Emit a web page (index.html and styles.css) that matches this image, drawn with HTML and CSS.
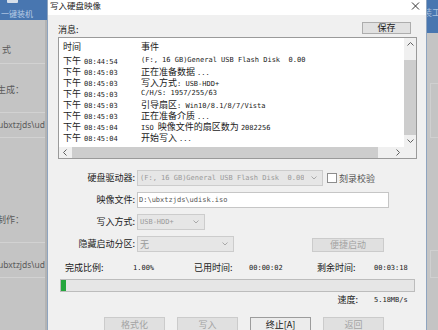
FILE: index.html
```html
<!DOCTYPE html>
<html lang="zh-CN">
<head>
  <meta charset="UTF-8">
  <title>写入硬盘映像</title>
  <link rel="stylesheet" href="styles.css">
</head>
<body>
<div class="screen">

  <div class="app-left">
    <div class="app-head">
      <span class="app-icon"></span>
      <span>一键装机</span>
    </div>
    <div class="app-side">
      <div class="side-row row-a">式</div>
      <div class="side-row row-b">生成：</div>
      <div class="side-row row-c">ubxtzjds\udisk</div>
      <div class="side-row row-d">制作：</div>
      <div class="side-row row-e">ubxtzjds\udisk</div>
    </div>
  </div>

  <div class="dialog">
    <div class="titlebar">
      <span class="title">写入硬盘映像</span>
      <svg class="close" width="9" height="8" viewBox="0 0 9 8"><path d="M1 0.5 L8 7.5 M8 0.5 L1 7.5" stroke="#333" stroke-width="1" fill="none"/></svg>
    </div>

    <div class="dialog-body">
      <div class="msg-head">
        <span class="msg-label">消息:</span>
        <button class="btn btn-save">保存</button>
      </div>

      <div class="log">
        <div class="log-list">
          <div class="log-head"><span class="col-time">时间</span><span>事件</span></div>
          <div class="log-row"><span class="col-time"><span>下午</span><span class="m">08:44:54</span></span><span class="m">(F:, 16 GB)General USB Flash Disk  0.00</span></div>
          <div class="log-row"><span class="col-time"><span>下午</span><span class="m">08:45:03</span></span><span>正在准备数据 <span class="m">...</span></span></div>
          <div class="log-row"><span class="col-time"><span>下午</span><span class="m">08:45:03</span></span><span>写入方式<span class="m">: USB-HDD+</span></span></div>
          <div class="log-row"><span class="col-time"><span>下午</span><span class="m">08:45:03</span></span><span class="m">C/H/S: 1957/255/63</span></div>
          <div class="log-row"><span class="col-time"><span>下午</span><span class="m">08:45:03</span></span><span>引导扇区<span class="m">: Win10/8.1/8/7/Vista</span></span></div>
          <div class="log-row"><span class="col-time"><span>下午</span><span class="m">08:45:03</span></span><span>正在准备介质 <span class="m">...</span></span></div>
          <div class="log-row"><span class="col-time"><span>下午</span><span class="m">08:45:04</span></span><span><span class="m">ISO </span>映像文件的扇区数为 <span class="m">2082256</span></span></div>
          <div class="log-row"><span class="col-time"><span>下午</span><span class="m">08:45:04</span></span><span>开始写入 <span class="m">...</span></span></div>
        </div>
        <div class="vscroll">
          <div class="arrow"><svg width="7" height="4" viewBox="0 0 7 4"><path d="M0.5 3.5 L3.5 0.5 L6.5 3.5" fill="none" stroke="#606060"/></svg></div>
          <div class="vtrack"><div class="thumb"></div></div>
          <div class="arrow"><svg width="7" height="4" viewBox="0 0 7 4"><path d="M0.5 0.5 L3.5 3.5 L6.5 0.5" fill="none" stroke="#606060"/></svg></div>
        </div>
        <div class="hscroll">
          <div class="arrow"><svg width="4" height="7" viewBox="0 0 4 7"><path d="M3.5 0.5 L0.5 3.5 L3.5 6.5" fill="none" stroke="#606060"/></svg></div>
          <div class="htrack"><div class="thumb"></div></div>
          <div class="arrow"><svg width="4" height="7" viewBox="0 0 4 7"><path d="M0.5 0.5 L3.5 3.5 L0.5 6.5" fill="none" stroke="#606060"/></svg></div>
        </div>
        <div class="corner"></div>
      </div>

      <div class="form">
        <label>硬盘驱动器:</label>
        <div class="field">
          <div class="combo combo-drive">
            <span class="combo-text m">(F:, 16 GB)General USB Flash Disk  0.00</span>
            <svg width="6" height="4" viewBox="0 0 6 4"><path d="M0.5 0.5 L3 3 L5.5 0.5" fill="none" stroke="#a8a8a8"/></svg>
          </div>
          <span class="check"></span>
          <span class="check-label">刻录校验</span>
        </div>

        <label>映像文件:</label>
        <div class="field">
          <div class="input"><span class="m">D:\ubxtzjds\udisk.iso</span></div>
        </div>

        <label>写入方式:</label>
        <div class="field">
          <div class="combo combo-mode">
            <span class="combo-text m">USB-HDD+</span>
            <svg width="6" height="4" viewBox="0 0 6 4"><path d="M0.5 0.5 L3 3 L5.5 0.5" fill="none" stroke="#a8a8a8"/></svg>
          </div>
        </div>

        <label>隐藏启动分区:</label>
        <div class="field">
          <div class="combo combo-hide">
            <span class="combo-text">无</span>
            <svg width="6" height="4" viewBox="0 0 6 4"><path d="M0.5 0.5 L3 3 L5.5 0.5" fill="none" stroke="#a8a8a8"/></svg>
          </div>
          <button class="btn btn-off btn-quick">便捷启动</button>
        </div>
      </div>

      <div class="stats">
        <span class="first">完成比例:</span><span class="m">1.00%</span>
        <span>已用时间:</span><span class="m">00:00:02</span>
        <span>剩余时间:</span><span class="m">00:03:18</span>
        <div class="progress"><div class="progress-fill" style="width: 1.4%"></div></div>
        <span class="speed-label">速度:</span><span class="m">5.18MB/s</span>
      </div>

      <div class="actions">
        <button class="btn btn-off">格式化</button>
        <button class="btn btn-off">写入</button>
        <button class="btn btn-stop">终止[A]</button>
        <button class="btn btn-off">返回</button>
      </div>
    </div>
  </div>

  <div class="app-right">
    <div class="app-right-head">装工</div>
    <div class="app-right-body">
      <div class="ghost-box"></div>
      <div class="ghost-box"></div>
    </div>
  </div>

</div>
</body>
</html>
```

FILE: styles.css
```css
* {
  box-sizing: border-box;
}
body {
  margin: 0;
  background: #c4c4c4;
  font-family: "Noto Sans CJK SC", "Noto Sans", sans-serif;
  font-size: 9px;
  color: #1a1a1a;
}
.screen {
  display: flex;
  width: 438px;
  height: 330px;
  overflow: hidden;
}
.m {
  font-family: "DejaVu Sans Mono", monospace;
  font-size: 7px;
  white-space: pre;
}

/* app behind the dialog */
.app-left {
  width: 47px;
  flex: none;
  display: flex;
  flex-direction: column;
  color: #5a5a5a;
}
.app-head {
  position: relative;
  flex: none;
  height: 20px;
  background: #4876b0;
  color: #b9cde6;
  font-size: 8px;
  line-height: 10px;
  padding: 9px 0 0 1px;
  white-space: nowrap;
  overflow: hidden;
}
.app-icon {
  position: absolute;
  left: 7px;
  top: -3px;
  width: 11px;
  height: 6px;
  background: #d6dfea;
  border-radius: 1px;
}
.app-side {
  flex: 1;
  border-right: 2px solid #b3b3b3;
  overflow: hidden;
  white-space: nowrap;
}
.side-row {
  border-bottom: 1px solid #d2d2d2;
  line-height: 12px;
}
.row-a { height: 44px; padding: 24px 0 0 2px; }
.row-b { height: 49px; padding-top: 20px; text-indent: -3px; }
.row-c { height: 25px; padding-top: 6px; text-indent: -2px; font-family: "Noto Sans", sans-serif; font-size: 8.5px; }
.row-d { height: 105px; padding-top: 76px; text-indent: -3px; }
.row-e { height: 35px; padding-top: 16px; text-indent: -2px; font-family: "Noto Sans", sans-serif; font-size: 8.5px; }

.app-right {
  flex: 1;
  overflow: hidden;
}
.app-right-head {
  height: 33px;
  background: #4876b0;
  color: #a9c1de;
  font-size: 9px;
  line-height: 12px;
  padding-top: 7px;
  text-indent: -4px;
  white-space: nowrap;
}
.app-right-body {
  padding: 50px 0 0 3px;
}
.ghost-box {
  height: 55px;
  border: 1px solid #d0d0d0;
  border-right: 0;
}
.ghost-box + .ghost-box {
  margin-top: 112px;
  height: 28px;
}

/* dialog */
.dialog {
  width: 380px;
  flex: none;
  overflow: hidden;
  background: #f0f0f0;
  border-left: 1px solid #8ea4bf;
  border-right: 1px solid #8ea4bf;
}
.titlebar {
  height: 15px;
  background: #fff;
  display: flex;
  justify-content: space-between;
  align-items: flex-start;
  padding: 0 6px 0 2px;
}
.title {
  font-size: 8.5px;
  line-height: 11px;
}
.close {
  margin-top: 2px;
}
.dialog-body {
  padding: 0 9px 0 10px;
}

.btn {
  font: inherit;
  padding: 0;
  background: #e1e1e1;
  border: 1px solid #adadad;
  color: #1a1a1a;
  line-height: 10px;
}
.btn-off {
  background: #e0e0e0;
  border-color: #cbcbcb;
  color: #a3a3a3;
}
.btn-stop {
  background: #ececec;
  border-color: #9c9c9c;
  color: #111;
}

.msg-head {
  display: flex;
  justify-content: space-between;
  align-items: flex-start;
  padding-top: 7px;
  height: 22px;
}
.msg-label {
  line-height: 12px;
  padding-top: 2px;
}
.btn-save {
  width: 49px;
  height: 12px;
  margin-right: 6px;
}

/* log list */
.log {
  height: 122px;
  border: 1px solid #9a9a9a;
  background: #fff;
  display: grid;
  grid-template-columns: 1fr 12px;
  grid-template-rows: 1fr 11px;
}
.log-list {
  overflow: hidden;
  padding-left: 4px;
  white-space: nowrap;
}
.log-head {
  display: flex;
  height: 17px;
  line-height: 17px;
}
.log-row {
  display: flex;
  height: 11px;
  line-height: 11px;
}
.col-time {
  width: 78px;
  flex: none;
}
.col-time .m {
  margin-left: 3px;
}
.vscroll {
  background: #f0f0f0;
  display: flex;
  flex-direction: column;
}
.arrow {
  display: flex;
  align-items: center;
  justify-content: center;
  height: 12px;
  width: 12px;
  flex: none;
}
.vtrack {
  flex: 1;
  padding-top: 10px;
}
.vtrack .thumb {
  height: 75px;
  background: #cdcdcd;
}
.hscroll {
  background: #f0f0f0;
  display: flex;
}
.hscroll .arrow {
  height: 11px;
}
.htrack {
  flex: 1;
  padding-left: 1px;
}
.htrack .thumb {
  width: 306px;
  height: 100%;
  background: #cdcdcd;
}
.corner {
  background: #f0f0f0;
}

/* options */
.form {
  margin-top: 11px;
  display: grid;
  grid-template-columns: 77px 1fr;
  column-gap: 2px;
  row-gap: 6px;
  grid-auto-rows: 16px;
}
.form label {
  text-align: right;
  line-height: 16px;
  white-space: nowrap;
}
.field {
  display: flex;
  align-items: center;
}
.combo {
  height: 16px;
  display: flex;
  align-items: center;
  justify-content: space-between;
  padding: 0 5px 0 2px;
  background: #e6e6e6;
  border: 1px solid #cccccc;
  color: #9a9a9a;
}
.combo-text {
  overflow: hidden;
}
.combo-drive { width: 186px; }
.combo-drive .combo-text { width: 164px; }
.combo-mode { width: 68px; }
.combo-hide { width: 97px; }
.check {
  width: 10px;
  height: 10px;
  margin-left: 4px;
  background: #fff;
  border: 1px solid #8d8d8d;
}
.check-label {
  margin-left: 2px;
  color: #555;
}
.input {
  width: 252px;
  height: 16px;
  display: flex;
  align-items: center;
  padding-left: 1px;
  background: #fff;
  border: 1px solid #c6c6c6;
  color: #555;
}
.btn-quick {
  width: 72px;
  height: 14px;
  margin-left: 78px;
  align-self: flex-end;
  line-height: 12px;
}

/* progress */
.stats {
  margin: 10px 2px 0 2px;
  display: grid;
  grid-template-columns: 73px 61px 55px 68px 57px 1fr;
  line-height: 12px;
  white-space: nowrap;
}
.stats .first {
  padding-left: 5px;
}
.progress {
  grid-column: 1 / -1;
  height: 13px;
  margin: 5px 0 2px;
  background: #e6e6e6;
  border: 1px solid #bcbcbc;
}
.progress-fill {
  height: 100%;
  background: #25a63d;
}
.speed-label {
  grid-column: 5;
  text-align: right;
  padding-right: 16px;
}

.actions {
  margin-top: 11px;
  padding-left: 46px;
  display: flex;
  gap: 12px;
}
.actions .btn {
  width: 61px;
  height: 16px;
  line-height: 14px;
}
```
